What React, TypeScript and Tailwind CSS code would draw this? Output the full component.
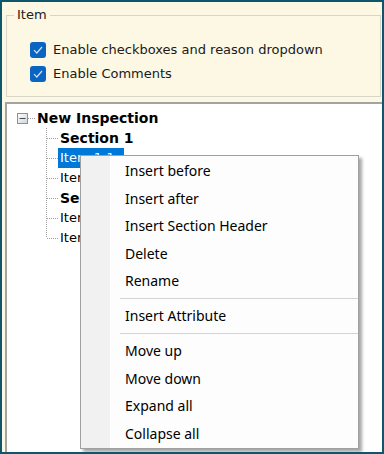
import React from "react";

const Check = () => (
  <div className="w-[16px] h-[16px] rounded-[3px] bg-[#0a64c2] flex items-center justify-center shrink-0">
    <svg width="10" height="8" viewBox="0 0 10 8">
      <path d="M1 4.2 L3.8 7 L9 1" fill="none" stroke="#cfe1f5" strokeWidth="1.2" />
    </svg>
  </div>
);

const Connector = ({ last }: { last?: boolean }) => (
  <svg width="12" height="20" viewBox="0 0 12 20" className="shrink-0">
    <line x1="0.5" y1="0" x2="0.5" y2={last ? 10 : 20} stroke="#a0a0a0" strokeDasharray="1 1" />
    <line x1="1" y1="10.5" x2="12" y2="10.5" stroke="#a0a0a0" strokeDasharray="1 1" />
  </svg>
);

const treeFont = { fontFamily: '"DejaVu Sans", Verdana, sans-serif' };

export default function App() {
  const children: { t: string; bold?: boolean; sel?: boolean }[] = [
    { t: "Section 1", bold: true },
    { t: "Item 1.1", sel: true },
    { t: "Item 1.2" },
    { t: "Section 2", bold: true },
    { t: "Item 2.1" },
    { t: "Item 2.2" },
  ];
  const menu: (string | null)[] = [
    "Insert before",
    "Insert after",
    "Insert Section Header",
    "Delete",
    "Rename",
    null,
    "Insert Attribute",
    null,
    "Move up",
    "Move down",
    "Expand all",
    "Collapse all",
  ];
  return (
    <div className="relative w-[384px] h-[454px] border-2 border-[#0d566b] bg-[#fcf8e4] flex flex-col overflow-hidden" style={treeFont}>
      <fieldset className="ml-[4px] mr-[1px] mt-[5px] border border-[#d8d5c8] px-0 text-[13px] text-[#1a1a1a]">
        <legend className="ml-[7px] px-[3px] leading-[16px] text-[13px] text-[#222]">Item</legend>
        <div className="pl-[23px] pt-[15px] pb-[10px] flex flex-col">
          <div className="h-[24px] flex items-center gap-[7px]">
            <Check />
            <span>Enable checkboxes and reason dropdown</span>
          </div>
          <div className="h-[24px] flex items-center gap-[7px]">
            <Check />
            <span>Enable Comments</span>
          </div>
        </div>
      </fieldset>
      <div className="mt-[5px] ml-[3px] flex-1 bg-white border-l-2 border-t-2 border-[#a3a3a3] pt-[4px] pl-[10px] text-[13px] text-black">
        <div className="h-[20px] flex items-center">
          <svg width="20" height="11" viewBox="0 0 20 11" className="shrink-0">
            <defs>
              <linearGradient id="g" x1="0" y1="0" x2="1" y2="1">
                <stop offset="0" stopColor="#ffffff" />
                <stop offset="1" stopColor="#d4d4d4" />
              </linearGradient>
            </defs>
            <rect x="0.5" y="0.5" width="10" height="10" fill="url(#g)" stroke="#8e8f8f" />
            <line x1="2.5" y1="5.5" x2="8.5" y2="5.5" stroke="#3b4a66" />
            <line x1="11" y1="5.5" x2="18" y2="5.5" stroke="#a0a0a0" strokeDasharray="1 1" />
          </svg>
          <span className="font-bold text-[14px]">New Inspection</span>
        </div>
        <div className="pl-[29px] flex flex-col">
          {children.map((c, i) => (
            <div key={i} className="h-[20px] flex items-center">
              <Connector last={i === children.length - 1} />
              <span
                className={
                  "px-[2px] leading-[20px] " +
                  (c.bold ? "font-bold text-[14px] " : "") +
                  (c.sel ? "bg-[#0078d7] text-white w-[66px]" : "")
                }
              >
                {c.t}
              </span>
            </div>
          ))}
        </div>
      </div>
      <div
        className="absolute left-[78px] top-[153px] w-[279px] border border-[#a0a0a0] bg-[#fdfdfd] shadow-[3px_3px_3px_rgba(0,0,0,0.35)] flex text-[14px] text-black"
        style={{ fontFamily: '"Noto Sans", "Segoe UI", sans-serif' }}
      >
        <div className="w-[29px] bg-[#f1f1f1] shrink-0" />
        <div className="flex-1 flex flex-col py-[1px]">
          {menu.map((m, i) =>
            m === null ? (
              <div key={i} className="h-[7.5px] flex items-center pl-[10px]">
                <div className="h-[1px] w-full bg-[#d4d4d4]" />
              </div>
            ) : (
              <div key={i} className="h-[27.5px] flex items-center pl-[15px]">
                {m}
              </div>
            )
          )}
        </div>
      </div>
    </div>
  );
}
